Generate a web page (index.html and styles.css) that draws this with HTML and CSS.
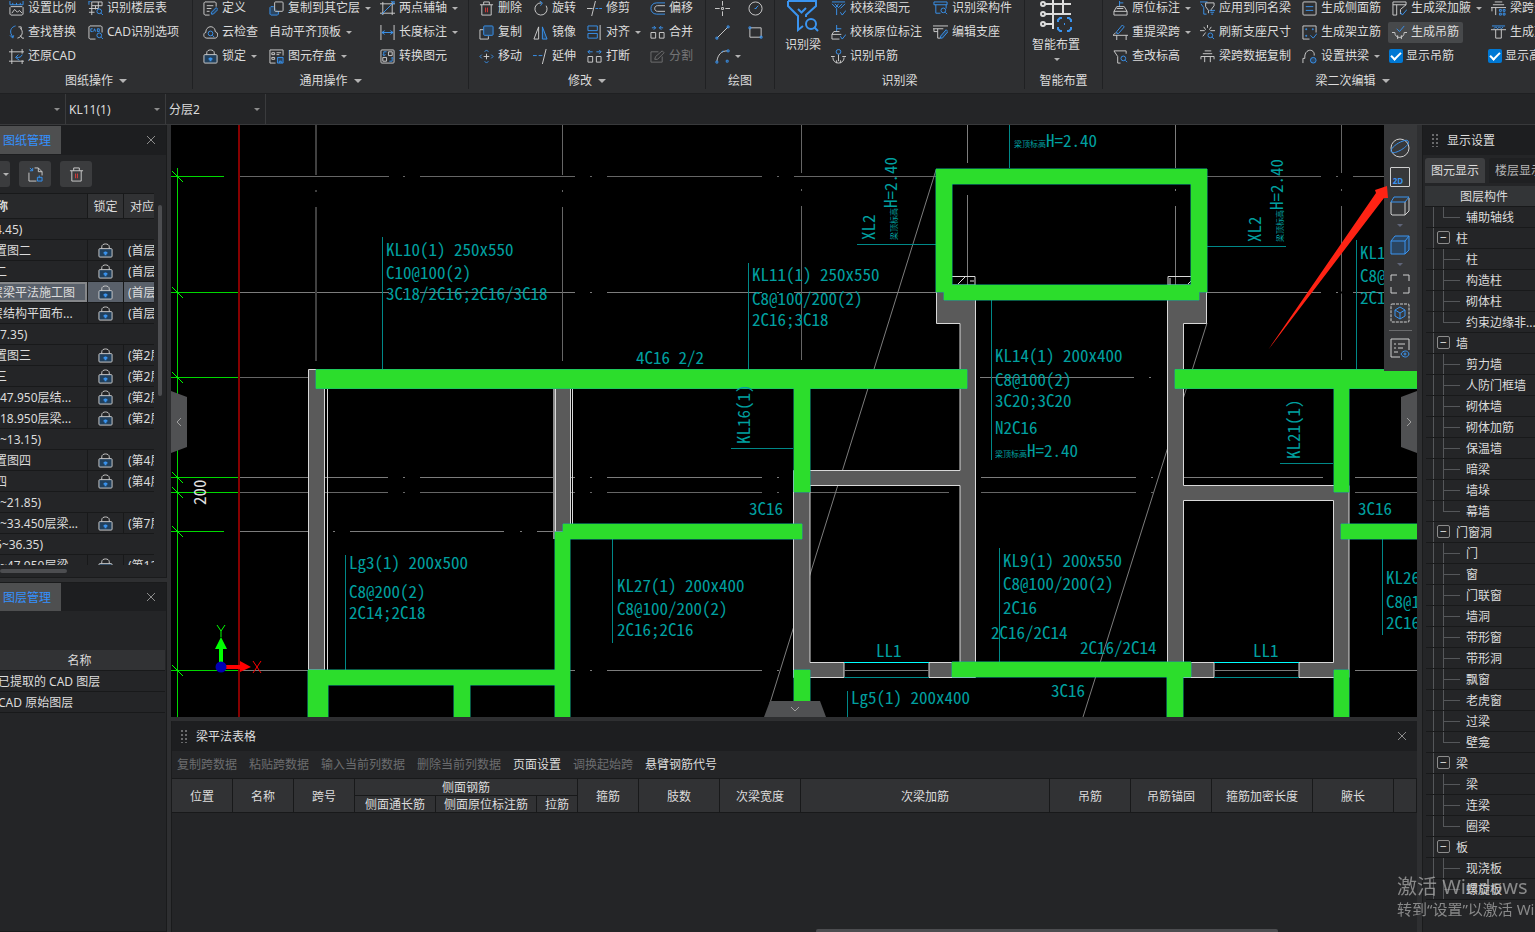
FILE: index.html
```
<!DOCTYPE html>
<html lang="zh-CN">
	<head>
		<title>梁平法表格</title>
		<meta charset="utf-8">
		<link rel="stylesheet" href="styles.css">
	</head>
	<body>
		<!-- icon set -->
		<svg class="defs" width="0" height="0">
			<symbol id="i-scale" viewBox="0 0 16 16"><path class="b" d="M1 0v4h14V0M4 2v2M8 2v2M12 2v2"/><path d="M2 6h12l1 1v7l-1 1H2l-1-1V7zM3 13l3-4 3 3 2-2 3 3"/></symbol>
			<symbol id="i-levels" viewBox="0 0 16 16"><path class="b" d="M4 0H1v4"/><path d="M4 1h11v4H4zM4 5v10M1 8h10V1M8 5v4M1 12h6"/><circle class="b" cx="12" cy="11" r="2.5"/><path class="b" d="M14 13l2 2"/></symbol>
			<symbol id="i-replace" viewBox="0 0 16 16"><path class="b" d="M7 1C3 2 1 5 2 9l2 4M1 11l3 3 1-3"/><path d="M9 14c5-1 7-7 3-11M10 2h3v3M12 11l2 3h2"/></symbol>
			<symbol id="i-cad" viewBox="0 0 16 16"><path d="M8 15H2l-1-1V2l1-1h12l1 1v6"/><path class="b" d="M5 4H3v3h2M6 7l1-3 1 3M10 4v3h2V4z"/><circle class="b" cx="12" cy="11" r="2.5"/><path class="b" d="M14 13l2 2"/></symbol>
			<symbol id="i-restore" viewBox="0 0 16 16"><path d="M3 0v16M14 0v5M0 3h16M0 13h16M14 12v4"/><path class="b" d="M14 6c-1 3-3 3-6 3M10 6L7 9l4 3"/></symbol>
			<symbol id="i-define" viewBox="0 0 16 16"><path d="M14 6V2l-1-1H2L1 2v12l1 1h5M4 5h7M4 8h5M4 11h3"/><path class="f" d="M14 7l2 2-5 5H9v-2z"/></symbol>
			<symbol id="i-cloud" viewBox="0 0 16 16"><path d="M4 14C0 14 0 8 3 8c0-8 10-8 10-1 4 1 3 7 0 7z"/><circle class="b" cx="8" cy="9" r="2.5"/><path class="b" d="M10 11l2 2"/></symbol>
			<symbol id="i-lock" viewBox="0 0 16 16"><rect class="lk" x="1" y="6" width="14" height="9" rx="1"/><path d="M4 6V4c0-4 8-4 8 0v2"/><path class="key" d="M8 9v4M6 10.500h4"/></symbol>
			<symbol id="i-floor" viewBox="0 0 16 16"><path class="f" d="M5 6H2L1 7v7l1 1h7l1-1v-3"/><rect x="6" y="1" width="9" height="10" rx="1"/></symbol>
			<symbol id="i-store" viewBox="0 0 16 16"><path d="M7 15H1V1h14v6M3 4h3v2H3zM3 9h3v2H3zM8 4h5M8 6h3"/><path class="f" d="M9 9h6v6H9zM11 15v-2h2v2"/></symbol>
			<symbol id="i-axis" viewBox="0 0 16 16"><path d="M3 1v14M13 1v14M0 3h16M0 13h16"/><path class="b" d="M2 14L14 2M12 0h3v3z"/></symbol>
			<symbol id="i-length" viewBox="0 0 16 16"><path d="M1 0v16M15 0v16"/><path class="b" d="M2 8h12M5 6L2 8l3 2M11 6l3 2-3 2"/></symbol>
			<symbol id="i-convert" viewBox="0 0 16 16"><rect x="1" y="1" width="14" height="14" rx="1"/><path d="M9 3h4v4H9zM3 9h4v4H3z"/><path class="b" d="M7 3H4v4M3 6l1 1 2-1M10 13h3V9M12 10l1-1 1 1"/></symbol>
			<symbol id="i-trash" viewBox="0 0 16 16"><path d="M1 4h14M5 4V1h6v3M3 4v11h10V4"/><path class="r" d="M7 7v5M9 7v5"/></symbol>
			<symbol id="i-rotate" viewBox="0 0 16 16"><path d="M9 2a6.500 6.500 0 1 0 5 3"/><path class="b" d="M7 0l3 2-2 3"/></symbol>
			<symbol id="i-trim" viewBox="0 0 16 16"><path d="M9 0L5 16M0 8h6"/><path class="b" d="M9 8h3M13 8h3"/></symbol>
			<symbol id="i-offset" viewBox="0 0 16 16"><path class="b" d="M16 2H7C-1 2-1 14 7 14h9"/><path d="M16 5H8C4 5 4 11 8 11h8"/></symbol>
			<symbol id="i-copy" viewBox="0 0 16 16"><path d="M5 5H1v10h9v-3"/><rect class="f" x="5" y="1" width="10" height="10" rx="1"/></symbol>
			<symbol id="i-mirror" viewBox="0 0 16 16"><path d="M6 2v13H1z"/><path class="f" d="M10 2v13h5z"/></symbol>
			<symbol id="i-align" viewBox="0 0 16 16"><path class="b" d="M1 1h10v5H1zM1 9h10v5H1z"/><path d="M14 0v16"/></symbol>
			<symbol id="i-merge" viewBox="0 0 16 16"><path d="M1 8h5v6H1zM10 8h5v6h-5z"/><path class="b" d="M2 3h4M4 1l2 2-2 2M14 3h-4M12 1l-2 2 2 2"/></symbol>
			<symbol id="i-move" viewBox="0 0 16 16"><path d="M8 5v6M5 8h6"/><path class="b" d="M6 3l2-2 2 2M6 13l2 2 2-2M3 6L1 8l2 2M13 6l2 2-2 2"/></symbol>
			<symbol id="i-extend" viewBox="0 0 16 16"><path class="b" d="M0 7h4M6 7h4"/><path d="M14 0L10 16"/></symbol>
			<symbol id="i-break" viewBox="0 0 16 16"><path d="M1 8h5v6H1zM10 8h5v6h-5z"/><path class="b" d="M6 3H1M3 1L1 3l2 2M10 3h5M13 1l2 2-2 2"/></symbol>
			<symbol id="i-split" viewBox="0 0 16 16"><path d="M9 3H1v11h12V8M5 11l1-3 7-6 2 2-7 7z"/></symbol>
			<symbol id="i-point" viewBox="0 0 16 16"><path d="M0 8h5M11 8h5M8 0v5M8 11v5"/><path d="M7 7h2v2H7z"/></symbol>
			<symbol id="i-circle" viewBox="0 0 16 16"><circle cx="8" cy="8" r="7"/><path class="b" d="M8 8l3-3M7 8h2"/></symbol>
			<symbol id="i-line" viewBox="0 0 16 16"><path d="M2 14L14 2"/><path class="b" d="M1 13h2v2H1zM13 1h2v2h-2z"/></symbol>
			<symbol id="i-rect" viewBox="0 0 16 16"><path d="M2 3h12v10H2z"/><path class="b" d="M1 2h2v2H1zM13 12h2v2h-2z"/></symbol>
			<symbol id="i-arc" viewBox="0 0 16 16"><path d="M2 13C3 6 7 2 13 2"/><path class="b" d="M1 13h2v2H1zM13 1h2v2h-2zM12 12h2v2h-2zM7 3l2-1"/></symbol>
			<symbol id="i-checkbeam" viewBox="0 0 16 16"><path class="b" d="M1 1h14M1 3l5 5v7M15 3l-5 5M10 12l2 3 4-5M4 3l4 4M8 3l-3 4M12 3L8 7"/></symbol>
			<symbol id="i-checktag" viewBox="0 0 16 16"><path class="b" d="M6 0v7M6 4h5M10 12l2 3 4-5"/><path d="M9 7H3l-2 3v5h8M1 10h10"/></symbol>
			<symbol id="i-hook" viewBox="0 0 16 16"><circle class="b" cx="8" cy="3" r="2.500"/><path d="M8 6v7M0 8h4M12 8h4M2 9c0 8 12 8 12 0M6 12v3M10 12v3"/></symbol>
			<symbol id="i-part" viewBox="0 0 16 16"><path class="b" d="M1 1h14v3H1zM3 4v9h5M14 4v4"/><circle class="b" cx="11" cy="10" r="2.500"/><path class="b" d="M13 12l2 2"/></symbol>
			<symbol id="i-support" viewBox="0 0 16 16"><path d="M0 1h16M0 4h11M5 4v10h3M1 4v3h4"/><path class="f" d="M14 5l2 2-6 7H8v-2z"/></symbol>
			<symbol id="i-tag" viewBox="0 0 16 16"><path class="b" d="M7 0v6M7 2h4"/><path d="M4 6h8l3 5v4H1v-4zM1 11h14M4 8h7"/></symbol>
			<symbol id="i-respan" viewBox="0 0 16 16"><path class="b" d="M10 0l2 2-6 7H4V7z"/><path d="M0 11l3-3M0 11h16M4 11v5M14 11v5"/></symbol>
			<symbol id="i-height" viewBox="0 0 16 16"><path d="M1 2h13v3M1 2l4 6v7h3"/><circle class="b" cx="11" cy="10" r="2.500"/><path class="b" d="M13 12l2 2"/></symbol>
			<symbol id="i-apply" viewBox="0 0 16 16"><path class="b" d="M0 1h8M1 3l3 4v7h3M10 10h6M11 12h4M12 14h2"/><path d="M6 2h9v3l-3 4v1M6 2v4l3 4v3"/></symbol>
			<symbol id="i-refresh" viewBox="0 0 16 16"><path d="M0 6h5M11 6h5M6 5L4 2M10 5l2-3M6 8l-3 4M8 0v3"/><circle class="b" cx="11" cy="11" r="2.500"/><path class="b" d="M13 13l2 2"/></symbol>
			<symbol id="i-span" viewBox="0 0 16 16"><path d="M5 2h7M3 5h10M1 8h14M1 8v3M15 8v3M5 8v6M11 8v6"/></symbol>
			<symbol id="i-side" viewBox="0 0 16 16"><rect x="1" y="1" width="14" height="14" rx="1"/><path class="b" d="M4 6h8M4 10h8"/></symbol>
			<symbol id="i-frame" viewBox="0 0 16 16"><path d="M8 15H1V1h14v7"/><path class="b" d="M4 4h1v1H4zM11 4h1v1h-1zM4 11h1v1H4zM9 11l3 3 4-5"/></symbol>
			<symbol id="i-arch" viewBox="0 0 16 16"><path d="M1 15v-5h2C2-1 14-1 13 7"/><circle class="f" cx="12" cy="12" r="3"/></symbol>
			<symbol id="i-haunch" viewBox="0 0 16 16"><path d="M1 1h14v3L9 9v5M1 1v14h4V4M1 4h14"/><path class="b" d="M9 12l2 3 5-6"/></symbol>
			<symbol id="i-hang" viewBox="0 0 16 16"><path class="b" d="M5 4l3 3 5-6"/><path d="M0 8h3c0 7 10 7 10 0h3M6 11v4M10 11v4"/></symbol>
			<symbol id="i-spanx" viewBox="0 0 16 16"><path d="M4 1h8M2 4h12M0 7h16M1 7v4M5 7v8"/><path class="b" d="M9 9h2v2H9zM13 9h2v2h-2zM9 13h2v2H9zM13 13h2v2h-2z"/></symbol>
			<symbol id="i-slab" viewBox="0 0 16 16"><path class="b" d="M1 1h14M3 4l2-2 2 2 2-2 2 2 2-2"/><path d="M0 5h16M5 5v9h6V5"/></symbol>
			<symbol id="i-newdoc" viewBox="0 0 16 16"><path d="M7 1h4l4 4v4M1 6v9h8M11 1v4h4"/><path class="b" d="M2 1l3 3M5 1v3H2"/><path class="f" d="M10 11h5v4h-5zM12 9v2"/></symbol>
			<symbol id="i-x" viewBox="0 0 10 10"><path d="M1 1l8 8M9 1L1 9"/></symbol>
		</svg>

		<header class="ribbon">
			<section class="group g-sheet">
				<div class="cols">
					<div class="col">
						<button><svg class="icon"><use href="#i-scale"/></svg>设置比例</button>
						<button><svg class="icon"><use href="#i-replace"/></svg>查找替换</button>
						<button><svg class="icon"><use href="#i-restore"/></svg>还原CAD</button>
					</div>
					<div class="col">
						<button><svg class="icon"><use href="#i-levels"/></svg>识别楼层表</button>
						<button><svg class="icon"><use href="#i-cad"/></svg>CAD识别选项</button>
					</div>
				</div>
				<h2>图纸操作<i class="caret big"></i></h2>
			</section>
			<section class="group g-common">
				<div class="cols">
					<div class="col">
						<button><svg class="icon"><use href="#i-define"/></svg>定义</button>
						<button><svg class="icon"><use href="#i-cloud"/></svg>云检查</button>
						<button><svg class="icon"><use href="#i-lock"/></svg>锁定<i class="caret"></i></button>
					</div>
					<div class="col">
						<button><svg class="icon"><use href="#i-floor"/></svg>复制到其它层<i class="caret"></i></button>
						<button>自动平齐顶板<i class="caret"></i></button>
						<button><svg class="icon"><use href="#i-store"/></svg>图元存盘<i class="caret"></i></button>
					</div>
					<div class="col">
						<button><svg class="icon"><use href="#i-axis"/></svg>两点辅轴<i class="caret"></i></button>
						<button><svg class="icon"><use href="#i-length"/></svg>长度标注<i class="caret"></i></button>
						<button><svg class="icon"><use href="#i-convert"/></svg>转换图元</button>
					</div>
				</div>
				<h2>通用操作<i class="caret big"></i></h2>
			</section>
			<section class="group g-modify">
				<div class="cols">
					<div class="col">
						<button><svg class="icon"><use href="#i-trash"/></svg>删除</button>
						<button><svg class="icon"><use href="#i-copy"/></svg>复制</button>
						<button><svg class="icon"><use href="#i-move"/></svg>移动</button>
					</div>
					<div class="col">
						<button><svg class="icon"><use href="#i-rotate"/></svg>旋转</button>
						<button><svg class="icon"><use href="#i-mirror"/></svg>镜像</button>
						<button><svg class="icon"><use href="#i-extend"/></svg>延伸</button>
					</div>
					<div class="col">
						<button><svg class="icon"><use href="#i-trim"/></svg>修剪</button>
						<button><svg class="icon"><use href="#i-align"/></svg>对齐<i class="caret"></i></button>
						<button><svg class="icon"><use href="#i-break"/></svg>打断</button>
					</div>
					<div class="col">
						<button><svg class="icon"><use href="#i-offset"/></svg>偏移</button>
						<button><svg class="icon"><use href="#i-merge"/></svg>合并</button>
						<button disabled><svg class="icon"><use href="#i-split"/></svg>分割</button>
					</div>
				</div>
				<h2>修改<i class="caret big"></i></h2>
			</section>
			<section class="group g-draw">
				<div class="cols">
					<div class="col">
						<button aria-label="点"><svg class="icon"><use href="#i-point"/></svg></button>
						<button aria-label="直线"><svg class="icon"><use href="#i-line"/></svg></button>
						<button aria-label="弧"><svg class="icon"><use href="#i-arc"/></svg><i class="caret"></i></button>
					</div>
					<div class="col">
						<button aria-label="圆"><svg class="icon"><use href="#i-circle"/></svg></button>
						<button aria-label="矩形"><svg class="icon"><use href="#i-rect"/></svg></button>
					</div>
				</div>
				<h2>绘图</h2>
			</section>
			<section class="group g-detect">
				<div class="cols">
					<button class="large">
						<svg class="icon-large" viewBox="0 0 32 32"><path class="b2" d="M1 1h28v5L19 15v2M1 1v5l10 10v14l5-4M14 13l5-5M11 9l4 4"/><circle class="b2" cx="24" cy="24" r="5"/><path class="b2" d="M27 27l4 4"/></svg>
						识别梁
					</button>
					<div class="col">
						<button><svg class="icon"><use href="#i-checkbeam"/></svg>校核梁图元</button>
						<button><svg class="icon"><use href="#i-checktag"/></svg>校核原位标注</button>
						<button><svg class="icon"><use href="#i-hook"/></svg>识别吊筋</button>
					</div>
					<div class="col">
						<button><svg class="icon"><use href="#i-part"/></svg>识别梁构件</button>
						<button><svg class="icon"><use href="#i-support"/></svg>编辑支座</button>
					</div>
				</div>
				<h2>识别梁</h2>
			</section>
			<section class="group g-smart">
				<div class="cols">
					<button class="large">
						<svg class="icon-large" viewBox="0 0 32 32"><path class="w2" d="M5 4h26M5 14h26M5 24h8M13 0v29M23 0v14"/><circle class="w2" cx="3" cy="4" r="2"/><circle class="w2" cx="3" cy="14" r="2"/><circle class="w2" cx="3" cy="24" r="2"/><path class="b2" d="M18 22v-2l2-2h2M27 18h2l2 2v2M31 27v2l-2 2h-2M22 31h-2l-2-2v-2M24 24h1"/></svg>
						智能布置
						<i class="caret"></i>
					</button>
				</div>
				<h2>智能布置</h2>
			</section>
			<section class="group g-edit">
				<div class="cols">
					<div class="col">
						<button><svg class="icon"><use href="#i-tag"/></svg>原位标注<i class="caret"></i></button>
						<button><svg class="icon"><use href="#i-respan"/></svg>重提梁跨<i class="caret"></i></button>
						<button><svg class="icon"><use href="#i-height"/></svg>查改标高</button>
					</div>
					<div class="col">
						<button><svg class="icon"><use href="#i-apply"/></svg>应用到同名梁</button>
						<button><svg class="icon"><use href="#i-refresh"/></svg>刷新支座尺寸</button>
						<button><svg class="icon"><use href="#i-span"/></svg>梁跨数据复制</button>
					</div>
					<div class="col">
						<button><svg class="icon"><use href="#i-side"/></svg>生成侧面筋</button>
						<button><svg class="icon"><use href="#i-frame"/></svg>生成架立筋</button>
						<button><svg class="icon"><use href="#i-arch"/></svg>设置拱梁<i class="caret"></i></button>
					</div>
					<div class="col">
						<button><svg class="icon"><use href="#i-haunch"/></svg>生成梁加腋<i class="caret"></i></button>
						<button class="hot"><svg class="icon"><use href="#i-hang"/></svg>生成吊筋</button>
						<label><input type="checkbox" checked>显示吊筋</label>
					</div>
					<div class="col">
						<button><svg class="icon"><use href="#i-spanx"/></svg>梁跨分类</button>
						<button><svg class="icon"><use href="#i-slab"/></svg>生成顶板</button>
						<label><input type="checkbox" checked>显示高度</label>
					</div>
				</div>
				<h2>梁二次编辑<i class="caret big"></i></h2>
			</section>
		</header>

		<nav class="combos">
			<label class="combo first"><select aria-label="构件类型"><option></option></select></label>
			<label class="combo"><select aria-label="构件"><option>KL11(1)</option></select></label>
			<label class="combo"><select aria-label="分层"><option>分层2</option></select></label>
		</nav>

		<main>
			<aside class="left">
				<section class="panel sheets">
					<div class="panel-head">
						<button class="tab on">图纸管理</button>
						<button class="close" aria-label="关闭"><svg><use href="#i-x"/></svg></button>
					</div>
					<div class="tools">
						<button class="stub" aria-label="更多"><i class="caret"></i></button>
						<button aria-label="添加图纸"><svg class="icon"><use href="#i-newdoc"/></svg></button>
						<button aria-label="删除图纸"><svg class="icon"><use href="#i-trash"/></svg></button>
					</div>
					<div class="sheet-list">
						<div class="clip">
							<table>
								<thead><tr><th class="name">称</th><th class="lk-col">锁定</th><th class="to">对应</th></tr></thead>
								<tbody>
									<tr><td class="in-1" colspan="3">4.45)</td></tr>
									<tr><td class="in-1">置图二</td><td><svg class="icon"><use href="#i-lock"/></svg></td><td>(首层</td></tr>
									<tr><td class="in-1">二</td><td><svg class="icon"><use href="#i-lock"/></svg></td><td>(首层</td></tr>
									<tr class="sel"><td>层梁平法施工图</td><td><svg class="icon"><use href="#i-lock"/></svg></td><td>(首层</td></tr>
									<tr><td>层结构平面布...</td><td><svg class="icon"><use href="#i-lock"/></svg></td><td>(首层</td></tr>
									<tr><td class="in-2" colspan="3">7.35)</td></tr>
									<tr><td class="in-1">置图三</td><td><svg class="icon"><use href="#i-lock"/></svg></td><td>(第2层</td></tr>
									<tr><td class="in-1">三</td><td><svg class="icon"><use href="#i-lock"/></svg></td><td>(第2层</td></tr>
									<tr><td class="in-2">47.950层结...</td><td><svg class="icon"><use href="#i-lock"/></svg></td><td>(第2层</td></tr>
									<tr><td class="in-2">18.950层梁...</td><td><svg class="icon"><use href="#i-lock"/></svg></td><td>(第2层</td></tr>
									<tr><td class="in-2" colspan="3">~13.15)</td></tr>
									<tr><td class="in-1">置图四</td><td><svg class="icon"><use href="#i-lock"/></svg></td><td>(第4层</td></tr>
									<tr><td class="in-1">四</td><td><svg class="icon"><use href="#i-lock"/></svg></td><td>(第4层</td></tr>
									<tr><td class="in-2" colspan="3">~21.85)</td></tr>
									<tr><td class="in-2">~33.450层梁...</td><td><svg class="icon"><use href="#i-lock"/></svg></td><td>(第7层</td></tr>
									<tr><td class="in-1" colspan="3">5~36.35)</td></tr>
									<tr><td class="in-2">~47.950层梁</td><td><svg class="icon"><use href="#i-lock"/></svg></td><td>(第12</td></tr>
								</tbody>
							</table>
						</div>
						<i class="vbar"></i>
					</div>
					<i class="hbar"></i>
				</section>
				<section class="panel layers">
					<div class="panel-head">
						<button class="tab on">图层管理</button>
						<button class="close" aria-label="关闭"><svg><use href="#i-x"/></svg></button>
					</div>
					<table class="layer-table">
						<thead><tr><th>名称</th></tr></thead>
						<tbody>
							<tr><td class="in-1">已提取的 CAD 图层</td></tr>
							<tr><td class="in-1">CAD 原始图层</td></tr>
						</tbody>
					</table>
				</section>
			</aside>

			<div class="center">
				<div class="view">
					<svg class="plan" viewBox="171 125 1246 592" preserveAspectRatio="xMinYMin slice">
						<!-- axis grid -->
						<g class="axis">
							<path class="dim" d="M239 176.500H936M1207 176.500H1384M239 377.500H308"/>
							<path d="M239 292.500H936M1207 292.500H1384M980 377.500H1134M1149 377.500h2"/>
							<path stroke-dasharray="155 15 2 15" d="M239 477.500H1417M239 670.500H1417"/>
							<path class="dim" stroke-dasharray="155 15 2 15" d="M239 492.500H1417"/>
							<path d="M239 531.500h79M333 531.500h2M350 531.500h154M520 531.500h2M537 531.500h18"/>
							<path class="dark" d="M316 125v50M316 190v2M316 207v154"/>
							<path class="dim" d="M562.500 125v50M562.500 190v2M562.500 207v154M801.500 125v48M801.500 189v2M801.500 206v154M1341.500 125v48M1341.500 189v2M1341.500 206v154"/>
							<path d="M967.500 125v38M967.500 195v90M1175.500 125v43M1175.500 189v2M1175.500 206v79"/>
							<path d="M936 170L770 703M1207 323L1083 717"/>
						</g>
						<path class="gap" d="M389 176.500h14M405 176.500h15M575 176.500h15M592 176.500h15M762 176.500h15M779 176.500h15M1321 176.500h15M1338 176.500h15M389 292.500h14M405 292.500h15M575 292.500h15M592 292.500h15M762 292.500h15M779 292.500h15M1321 292.500h15M1338 292.500h15"/>
						<!-- dimension chain -->
						<g class="chain">
							<path d="M177.500 168V717M171 176.500h53M171 292.500h68M171 377.500h68M171 477.500h68M171 492.500h68M171 531.500h53M171 670.500h68"/>
							<path class="tick" d="M172 171l11 11M172 287l11 11M172 372l11 11M172 472l11 11M172 487l11 11M172 526l11 11M172 665l11 11"/>
						</g>
						<path class="red-axis" d="M239 125V717"/>
						<!-- walls -->
						<g class="wall">
							<path d="M308.500 369.500H324.500V670H308.500z"/>
							<path class="soft" d="M553 389h3v150h-3z"/>
							<path d="M555.500 380H570.500V532H555.500z"/>
							<path class="open" d="M327.500 389V670M572.500 389V524"/>
							<path d="M793.500 480V677.500H844V662.500H810V485.500H960V662.500H929V677.500H975.500V285H936.500V323.500H960V470.500H793.500z"/>
							<path d="M1167.500 285H1206.500V323.500H1183.500V485.500H1349V677.500H1299V662.500H1333.500V500.500H1183.500V662.500H1214V677.500H1167.500z"/>
							<path class="open" d="M952 276.500h23v9M1191 276.500h-23v9M958 284l7-7M970 281h4M1170 278v7M1188 284l3-3"/>
						</g>
						<path class="win mid" d="M844 670.500h85M1214 670.500h85"/>
						<path class="win" d="M844 662.500h85M1214 662.500h85"/>
						<path class="win low" d="M844 677.500h85M1214 677.500h85"/>
						<!-- leaders -->
						<path class="leader" d="M382.500 237V369M748.500 263V369M1009.500 125V168M991.500 300V460M1356.500 240V369M999.500 548V662M345.500 555V670M612.500 539V643M847.500 691V717M1382.500 539V635M857 244.500H936M1207 246.500H1286M731 448.500H793M1280 463.500H1333"/>
						<!-- beams -->
						<path class="beam" d="M936 169H1207V292H1199V300H944V292H936zM952 184V285H1191V184zM316 369.500H967V388.500H810V492H794V388.500H316zM1175 369.500H1417V388.500H1349V492H1334V388.500H1175zM563 524H802V539H570V717H555V685H470V717H454V685H328V717H308V670H555V532H563zM794 670H810V717H794zM952 662H1191V677H1183V717H1167V677H952zM1341 524H1417V539H1341zM1334 670H1349V717H1334z"/>
						<!-- annotations -->
						<g class="note" transform="translate(0 -2)">
							<text x="386" y="258">KL10(1) 250x550</text>
							<text x="386" y="281">C10@100(2)</text>
							<text x="386" y="302">3C18/2C16;2C16/3C18</text>
							<text x="752" y="283">KL11(1) 250x550</text>
							<text x="752" y="307">C8@100/200(2)</text>
							<text x="752" y="328">2C16;3C18</text>
							<text x="636" y="366">4C16 2/2</text>
							<text x="1014" y="149"><tspan class="han">梁顶标高</tspan>H=2.40</text>
							<text x="995" y="364">KL14(1) 200x400</text>
							<text x="995" y="388">C8@100(2)</text>
							<text x="995" y="409">3C20;3C20</text>
							<text x="995" y="436">N2C16</text>
							<text x="995" y="459"><tspan class="han">梁顶标高</tspan>H=2.40</text>
							<text x="1360" y="261">KL15(1)</text>
							<text x="1360" y="284">C8@100</text>
							<text x="1360" y="306">2C16</text>
							<text x="749" y="517">3C16</text>
							<text x="349" y="571">Lg3(1) 200x500</text>
							<text x="349" y="600">C8@200(2)</text>
							<text x="349" y="621">2C14;2C18</text>
							<text x="617" y="594">KL27(1) 200x400</text>
							<text x="617" y="617">C8@100/200(2)</text>
							<text x="617" y="638">2C16;2C16</text>
							<text x="876" y="659">LL1</text>
							<text x="1003" y="569">KL9(1) 200x550</text>
							<text x="1003" y="592">C8@100/200(2)</text>
							<text x="1003" y="616">2C16</text>
							<text x="991" y="641">2C16/2C14</text>
							<text x="1080" y="656">2C16/2C14</text>
							<text x="1051" y="699">3C16</text>
							<text x="851" y="706">Lg5(1) 200x400</text>
							<text x="1253" y="659">LL1</text>
							<text x="1358" y="517">3C16</text>
							<text x="1386" y="586">KL26(1)</text>
							<text x="1386" y="610">C8@100</text>
							<text x="1386" y="631">2C16</text>
						</g>
						<g class="note" transform="translate(-2 0)">
							<text transform="translate(877 240) rotate(-90)">XL2</text>
							<text transform="translate(899 240) rotate(-90)"><tspan class="han">梁顶标高</tspan>H=2.40</text>
							<text transform="translate(1263 242) rotate(-90)">XL2</text>
							<text transform="translate(1285 242) rotate(-90)"><tspan class="han">梁顶标高</tspan>H=2.40</text>
							<text transform="translate(752 444) rotate(-90)">KL16(1)</text>
							<text transform="translate(1302 459) rotate(-90)">KL21(1)</text>
							<text class="white" transform="translate(208 505) rotate(-90)">200</text>
						</g>
						<!-- UCS -->
						<g class="ucs">
							<path fill="#00ff00" d="M219 664V649H215L221 637L227 649H223V664z"/>
							<path fill="#ff0000" d="M225 665H240V661L251 667L240 672V669H225z"/>
							<circle cx="221" cy="667" r="5.500" fill="#0000b4"/>
							<path class="uy" d="M217 625l4 6 4-6M221 631v6"/>
							<path class="ux" d="M253 661l8 12M261 661l-8 12"/>
						</g>
					</svg>
					<div class="viewbar">
						<button aria-label="动态观察"><svg viewBox="0 0 20 20"><circle cx="10" cy="10" r="9"/><path class="b" d="M18 3c4 4-16 16-17 10 0-3 6-8 12-10 3-1 4-1 5 0"/></svg></button>
						<button class="two-d" aria-label="二维">2D</button>
						<button aria-label="俯视"><svg viewBox="0 0 20 20"><path d="M1 6v12l1 1h13V6M15 19l4-4V2"/><path class="b" d="M1 6l3-5h15l-4 5z"/></svg></button>
						<i class="caret"></i>
						<button aria-label="三维"><svg viewBox="0 0 20 20"><path class="f" d="M1 6l4-5h14v14l-4 4H1zM1 6h14v13M15 6l4-5"/></svg></button>
						<i class="caret"></i>
						<button aria-label="全屏"><svg viewBox="0 0 20 20"><path d="M7 1H1v6M13 1h6v6M7 19H1v-6M13 19h6v-6"/></svg></button>
						<button aria-label="局部三维"><svg viewBox="0 0 20 20"><rect x="1" y="1" width="18" height="18" rx="1" stroke-dasharray="3 1"/><path class="b" d="M10 4l5 3v6l-5 3-5-3V7zM5 7l5 3 5-3M10 10v6"/></svg></button>
						<hr>
						<button aria-label="显示设置"><svg viewBox="0 0 20 20"><path d="M10 19H1V1h18v11M4 6h2M8 6h7M4 10h2M8 10h5M4 14h4"/><path class="b" d="M11 16c2-4 7-4 8 0-1 4-6 4-8 0z"/><circle class="b" cx="15" cy="16" r="1"/></svg></button>
					</div>
					<button class="grip g-left" aria-label="收起左侧"><svg viewBox="0 0 10 10"><path d="M7 1L3 5l4 4"/></svg></button>
					<button class="grip g-right" aria-label="收起右侧"><svg viewBox="0 0 10 10"><path d="M3 1l4 4-4 4"/></svg></button>
					<button class="grip g-bottom" aria-label="收起下方"><svg viewBox="0 0 10 10"><path d="M1 3l4 4 4-4"/></svg></button>
					<svg class="pointer" viewBox="0 0 122 166"><path d="M1 165L109 8 108 5 120 1 121 13 117 13z"/></svg>
				</div>

				<section class="spans">
					<div class="panel-head">
						<i class="dots"></i><h2>梁平法表格</h2>
						<button class="close" aria-label="关闭"><svg><use href="#i-x"/></svg></button>
					</div>
					<div class="span-tools">
						<button disabled>复制跨数据</button>
						<button disabled>粘贴跨数据</button>
						<button disabled>输入当前列数据</button>
						<button disabled>删除当前列数据</button>
						<button>页面设置</button>
						<button disabled>调换起始跨</button>
						<button>悬臂钢筋代号</button>
					</div>
					<table class="span-table">
						<colgroup>
							<col class="c61"><col class="c61"><col class="c61"><col class="c81"><col class="c101"><col class="c41"><col class="c61"><col class="c81"><col class="c81"><col class="c249"><col class="c81"><col class="c81"><col class="c101"><col class="c81"><col>
						</colgroup>
						<thead>
							<tr>
								<th rowspan="2">位置</th><th rowspan="2">名称</th><th rowspan="2">跨号</th>
								<th colspan="3">侧面钢筋</th>
								<th rowspan="2">箍筋</th><th rowspan="2">肢数</th><th rowspan="2">次梁宽度</th><th rowspan="2">次梁加筋</th>
								<th rowspan="2">吊筋</th><th rowspan="2">吊筋锚固</th><th rowspan="2">箍筋加密长度</th><th rowspan="2">腋长</th><th rowspan="2"></th>
							</tr>
							<tr><th>侧面通长筋</th><th>侧面原位标注筋</th><th>拉筋</th></tr>
						</thead>
					</table>
					<i class="hbar"></i>
				</section>
			</div>

			<aside class="right">
				<div class="panel-head"><i class="dots"></i><h2>显示设置</h2></div>
				<div class="tabs"><button class="on">图元显示</button><button>楼层显示</button></div>
				<h3>图层构件</h3>
				<ul class="tree">
					<li class="leaf last">辅助轴线</li>
					<li class="node"><button>−</button>柱</li>
					<li class="leaf">柱</li>
					<li class="leaf">构造柱</li>
					<li class="leaf">砌体柱</li>
					<li class="leaf last">约束边缘非...</li>
					<li class="node"><button>−</button>墙</li>
					<li class="leaf">剪力墙</li>
					<li class="leaf">人防门框墙</li>
					<li class="leaf">砌体墙</li>
					<li class="leaf">砌体加筋</li>
					<li class="leaf">保温墙</li>
					<li class="leaf">暗梁</li>
					<li class="leaf">墙垛</li>
					<li class="leaf last">幕墙</li>
					<li class="node"><button>−</button>门窗洞</li>
					<li class="leaf">门</li>
					<li class="leaf">窗</li>
					<li class="leaf">门联窗</li>
					<li class="leaf">墙洞</li>
					<li class="leaf">带形窗</li>
					<li class="leaf">带形洞</li>
					<li class="leaf">飘窗</li>
					<li class="leaf">老虎窗</li>
					<li class="leaf">过梁</li>
					<li class="leaf last">壁龛</li>
					<li class="node"><button>−</button>梁</li>
					<li class="leaf">梁</li>
					<li class="leaf">连梁</li>
					<li class="leaf last">圈梁</li>
					<li class="node"><button>−</button>板</li>
					<li class="leaf">现浇板</li>
					<li class="leaf">螺旋板</li>
				</ul>
			</aside>
		</main>

		<div class="activate">
			<p class="l1">激活 Windows</p>
			<p>转到“设置”以激活 Windows。</p>
		</div>
	</body>
</html>
```
FILE: styles.css
```
* { box-sizing: border-box; }
html { height: 100%; }
body {
	margin: 0;
	height: 100%;
	display: flex;
	flex-direction: column;
	overflow: hidden;
	background-color: #2e2f31;
	color: #dcdcdc;
	font: 12px/16px "Noto Sans", "Noto Sans CJK SC", sans-serif;
	cursor: default;
}
h2, h3, p, ul { margin: 0; padding: 0; font-size: 12px; font-weight: 400; }
button {
	padding: 0;
	border: none;
	background: none;
	font: inherit;
	color: inherit;
	white-space: nowrap;
}
svg { fill: none; stroke: #cfcfcf; stroke-width: 1; }
.defs { position: absolute; }
.b { stroke: #3a94f0; }
.f { stroke: #3a94f0; fill: #2b4560; }
.r { stroke: #e03c3c; }
.lk { fill: #22405c; }
.key { stroke: #3a94f0; stroke-width: 2; }
.b2 { stroke: #3a94f0; stroke-width: 2; }
.w2 { stroke: #dcdcdc; stroke-width: 2; }

.icon { width: 15px; height: 15px; flex: none; }
.caret {
	display: inline-block;
	flex: none;
	border: 3px solid transparent;
	border-top-color: #b4b4b4;
	border-bottom: none;
	margin-left: 1px;
}
.caret.big { border-width: 4px 4px 0; margin-left: 6px; vertical-align: 2px; }

/* ribbon */
.ribbon {
	flex: none;
	display: flex;
	height: 94px;
	overflow: hidden;
	border-bottom: 1px solid #1f2022;
}
.group {
	flex: none;
	margin: -4px 0 4px;
	border-right: 1px solid #202123;
}
.group h2 { text-align: center; margin-top: 5px; }
.cols { display: grid; height: 72px; }
.col { display: grid; grid-template-rows: repeat(3, 24px); align-items: center; justify-items: start; }
.col button, .col label { display: flex; align-items: center; gap: 4px; height: 21px; line-height: 18px; white-space: nowrap; }
.col button:disabled { opacity: 0.4; }
.col .hot { padding: 0 4px; margin-left: -4px; border-radius: 2px; background-color: #47494b; }
.col label { margin-left: -3px; gap: 3px; }
.g-sheet { width: 193px; }
.g-sheet .cols { padding-left: 9px; grid-template-columns: 79px auto; }
.g-common { width: 276px; }
.g-common .cols { padding-left: 10px; grid-template-columns: 66px 111px auto; }
.g-modify { width: 237px; }
.g-modify .cols { padding-left: 10px; grid-template-columns: 54px 54px 63px auto; }
.g-draw { width: 69px; }
.g-draw .cols { padding-left: 9px; grid-template-columns: 33px auto; }
.g-detect { width: 250px; }
.g-detect .cols { padding-left: 10px; grid-template-columns: 46px 102px auto; }
.g-smart { width: 78px; }
.g-smart .cols { padding-left: 7px; grid-template-columns: 48px; }
.g-edit { width: 500px; }
.g-edit .cols { padding-left: 10px; grid-template-columns: 87px 102px 90px 99px auto; }
.large { display: flex; flex-direction: column; align-items: center; width: max-content; padding-top: 4px; gap: 5px; }
.icon-large { width: 32px; height: 32px; }
input[type="checkbox"] {
	appearance: none;
	display: grid;
	place-items: center;
	width: 14px;
	height: 14px;
	margin: 0;
	border-radius: 2px;
	background-color: #0078d4;
}
input[type="checkbox"]:checked::after {
	content: '';
	width: 4px;
	height: 8px;
	margin-top: -2px;
	border: solid #ffffff;
	border-width: 0 2px 2px 0;
	transform: rotate(45deg);
}

/* combo row */
.combos {
	flex: none;
	display: flex;
	height: 31px;
	background-color: #242527;
	border-bottom: 1px solid #38393b;
}
.combo {
	position: relative;
	width: 100px;
	border-right: 1px solid #3a3b3d;
}
.combo.first { width: 66px; }
.combo::after {
	content: '';
	position: absolute;
	right: 5px;
	top: 14px;
	border: 3px solid transparent;
	border-top-color: #8c8c8c;
	border-bottom: none;
}
.combo select {
	appearance: none;
	width: 100%;
	height: 30px;
	padding: 2px 4px 0 3px;
	border: none;
	outline: none;
	background: none;
	color: inherit;
	font: inherit;
}

main { flex: 1; display: flex; min-height: 0; }

/* docked panels */
.panel, .right, .spans { background-color: #242527; }
.panel-head {
	flex: none;
	display: flex;
	align-items: center;
	height: 30px;
	background-color: #1d1e20;
}
.panel-head h2 { padding-top: 2px; }
.tab { width: 61px; height: 28px; text-align: left; padding: 2px 0 0 3px; }
.tab.on { background-color: #4e4f50; color: #3391ff; }
.close { margin-left: auto; margin-right: 10px; display: flex; }
.close svg { width: 10px; height: 10px; stroke: #8c8c8c; }
.dots {
	width: 7px;
	height: 14px;
	margin: 0 9px 0 8px;
	background: radial-gradient(#6a6b6d 1px, transparent 1px) 0 0 / 4px 4px;
}
.left { width: 167px; flex: none; display: flex; flex-direction: column; gap: 4px; }
.panel { border: 1px solid #1a1b1c; border-left: none; display: flex; flex-direction: column; }
.sheets { height: 453px; border-top: none; flex: none; }
.layers { flex: 1; }
.layers .panel-head { height: 28px; }
.tools { display: flex; align-items: center; gap: 9px; height: 38px; flex: none; }
.tools button {
	width: 32px;
	height: 26px;
	border-radius: 3px;
	background-color: #3b3c3e;
	display: grid;
	place-items: center;
}
.tools .stub { width: 10px; border-radius: 0 3px 3px 0; }
.sheet-list { display: flex; height: 372px; }
.clip { width: 154px; overflow: hidden; border-top: 1px solid #18191a; }
table { border-collapse: separate; border-spacing: 0; table-layout: fixed; }
th, td { padding: 1px 0 0; font-weight: 400; white-space: nowrap; border-bottom: 1px solid #18191a; }
.clip table { width: 196px; margin-left: -9px; }
.clip th { height: 25px; border-right: 1px solid #18191a; background-color: #313234; }
.clip th.name { width: 97px; text-align: left; padding-left: 5px; font-weight: 700; background-color: #28292b; }
.clip .lk-col { width: 36px; }
.clip .to { text-align: left; padding-left: 6px; }
.clip td { height: 21px; line-height: 16px; border-right: 1px solid #18191a; }
.clip td .icon { display: block; margin: 0 auto; }
.clip td:last-child { padding-left: 4px; border-right: none; }
.clip td.in-1, .layer-table .in-1 { padding-left: 4px; }
.clip td.in-2 { padding-left: 9px; }
.sel td { background-color: #59606a; }
.sel td:first-child { box-shadow: inset 0 0 0 2px #85878a; }
.vbar { width: 4px; height: 191px; margin: 12px 0 0 4px; border-radius: 2px; background-color: #4c4d50; }
.hbar { height: 4px; border-radius: 2px; background-color: #4c4d50; }
.sheets .hbar { width: 67px; margin-top: 4px; }
.layer-table { width: 171px; margin: 39px 0 0 -6px; }
.layer-table th { height: 21px; background-color: #313234; }
.layer-table td { height: 21px; }

/* drawing area */
.center { flex: 1; min-width: 0; display: flex; flex-direction: column; margin: 0 5px 0 4px; }
.view { flex: 1; min-height: 0; position: relative; overflow: hidden; background-color: #000000; }
.plan { display: block; width: 100%; height: 100%; }
.axis { stroke: #7c7c7c; }
.axis .dim { stroke: #666666; }
.axis .dark { stroke: #404040; stroke-width: 2; }
.axis path[stroke-dasharray] { stroke-dashoffset: 6; }
.gap { stroke: #000000; stroke-width: 2; }
.chain { stroke: #00d800; }
.chain .tick { stroke: #00ff00; }
.red-axis { stroke: #860000; stroke-width: 2; }
.wall { fill: #5a5a5a; stroke: #d8d8d8; }
.wall .open { fill: none; }
.wall .soft { fill: #8a8a8a; stroke: none; }
.win { stroke: #00ffff; }
.win.low { stroke: #008c8c; }
.win.mid { stroke: #7c7c7c; }
.leader { stroke: #008888; }
.beam { fill: #2cdd2c; fill-rule: evenodd; stroke: #12b48c; stroke-width: 1; paint-order: stroke; }
.note text { font-family: "Noto Sans Mono CJK SC", "Noto Sans CJK SC", sans-serif; font-size: 17px; font-weight: 300; fill: #00a0a0; stroke: none; white-space: pre; }
.note .han { font-size: 8px; }
.note .white { fill: #e0e0e0; }
.ucs { stroke: none; }
.ucs .uy { stroke: #00ff00; }
.ucs .ux { stroke: #ff0000; }
.pointer { position: absolute; left: 1096px; top: 60px; width: 122px; height: 166px; fill: #ff2314; stroke: none; pointer-events: none; }

.viewbar {
	position: absolute;
	top: 0;
	right: 0;
	width: 33px;
	height: 246px;
	padding: 13px 1px 0 0;
	display: flex;
	flex-direction: column;
	align-items: center;
	gap: 9px;
	background-color: #37383a;
}
.viewbar button { width: 20px; height: 20px; flex: none; }
.viewbar svg { display: block; width: 20px; height: 20px; }
.viewbar .caret { margin: -1px 0; border-top-color: #5f6478; }
.viewbar hr { width: 23px; height: 1px; margin: -2px 0; border: none; background-color: #6a6b6d; flex: none; }
.viewbar .two-d { border: 1px solid #cfcfcf; border-radius: 1px; color: #3a94f0; font-size: 8px; font-weight: 700; line-height: 8px; padding: 8px 4px 0 0; }
.grip { position: absolute; background-color: #505153; display: grid; place-items: center; }
.grip svg { width: 10px; height: 10px; stroke: #a0a0a0; }
.g-left { left: 0; top: 266px; width: 16px; height: 62px; clip-path: polygon(0 0, 100% 6px, 100% 56px, 0 100%); }
.g-right { right: 0; top: 266px; width: 16px; height: 62px; clip-path: polygon(100% 0, 0 6px, 0 56px, 100% 100%); }
.g-bottom { left: 593px; bottom: 0; width: 62px; height: 16px; clip-path: polygon(6px 0, 56px 0, 100% 100%, 0 100%); }

/* beam table */
.spans { height: 211px; margin-top: 4px; flex: none; display: flex; flex-direction: column; border-left: 1px solid #1a1b1c; overflow: hidden; }
.span-tools { display: flex; gap: 12px; height: 27px; padding-left: 5px; align-items: center; }
.span-tools button:disabled { color: #6c6d6f; }
.span-table { width: 100%; border-top: 1px solid #18191a; }
.span-table th { height: 17px; line-height: 15px; border-right: 1px solid #18191a; background-color: #313234; }
.c41 { width: 41px; }
.c61 { width: 61px; }
.c81 { width: 81px; }
.c101 { width: 101px; }
.c249 { width: 249px; }
.spans .hbar { width: 462px; margin: auto 0 -1px 644px; flex: none; }

/* display settings */
.right { width: 113px; flex: none; overflow: hidden; border-left: 1px solid #1a1b1c; }
.tabs { display: flex; gap: 4px; padding: 3px 0 0 2px; height: 31px; }
.tabs button { flex: none; width: 60px; height: 25px; border-radius: 3px 3px 0 0; background-color: #1f2022; color: #b4b4b4; }
.tabs .on { background-color: #3d3e40; color: #dcdcdc; }
.right h3 {
	height: 21px;
	margin-left: 2px;
	padding: 3px 0 0 35px;
	background-color: #333537;
	border-bottom: 1px solid #18191a;
}
.tree { list-style: none; margin-left: 3px; white-space: nowrap; }
.tree li {
	position: relative;
	height: 21px;
	padding: 3px 0 0 40px;
	border-bottom: 1px solid #18191a;
}
.tree li.node { padding-left: 30px; }
.tree li::before, .tree .leaf::after { content: ''; position: absolute; top: 0; left: 7px; height: 20px; border-left: 1px solid #55575a; }
.tree .leaf::after {
	left: 17px;
	width: 16px;
	background: linear-gradient(#55575a, #55575a) 0 10px / 16px 1px no-repeat;
}
.tree .last::after { height: 10px; background: none; border-bottom: 1px solid #55575a; }
.tree button {
	position: absolute;
	left: 11px;
	top: 3px;
	width: 13px;
	height: 13px;
	border: 1px solid #8c8c8c;
	border-radius: 2px;
	line-height: 10px;
	background-color: #242527;
}

/* system watermark */
.activate {
	position: fixed;
	left: calc(100% - 138px);
	top: calc(100% - 59px);
	color: rgba(190, 190, 190, 0.65);
	white-space: nowrap;
	pointer-events: none;
}
.activate p { font-size: 15px; line-height: 16px; }
.activate .l1 { font-size: 20px; line-height: 28px; }
```
